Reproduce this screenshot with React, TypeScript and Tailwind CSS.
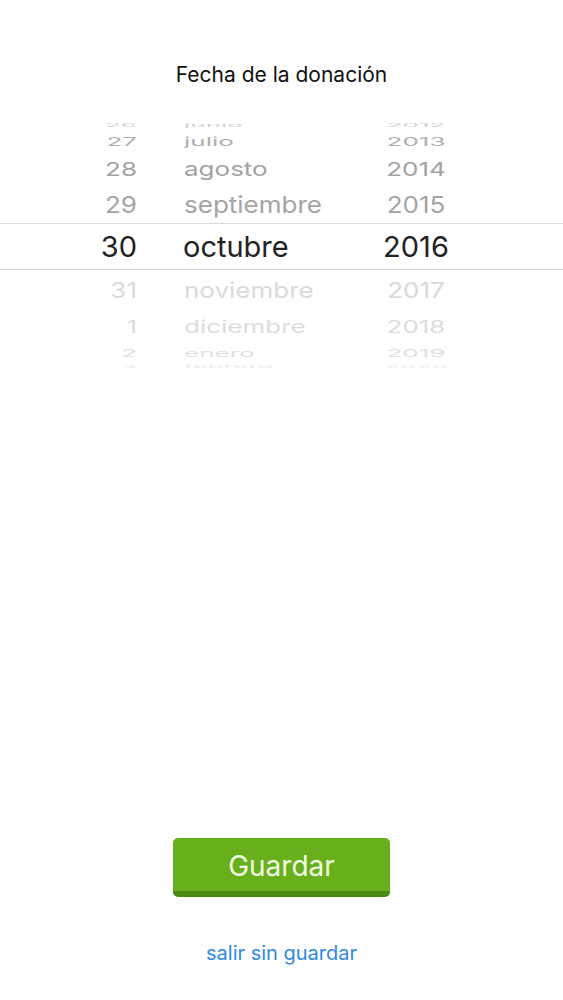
import React from "react";

type Row = {
  day: string;
  month: string;
  year: string;
  h: string;
  sy: string;
  color: string;
};

const above: Row[] = [
  { day: "26", month: "junio", year: "2012", h: "h-[12px]", sy: "scale-y-[0.16]", color: "text-[#d0d0d0]" },
  { day: "27", month: "julio", year: "2013", h: "h-[20px]", sy: "scale-y-[0.45]", color: "text-[#b0b0b0]" },
  { day: "28", month: "agosto", year: "2014", h: "h-[34px]", sy: "scale-y-[0.74]", color: "text-[#a2a2a2]" },
  { day: "29", month: "septiembre", year: "2015", h: "h-[37px]", sy: "scale-y-[0.88]", color: "text-[#a4a4a4]" },
];

const below: Row[] = [
  { day: "31", month: "noviembre", year: "2017", h: "h-[40px]", sy: "scale-y-[0.84]", color: "text-[#dadada]" },
  { day: "1", month: "diciembre", year: "2018", h: "h-[34px]", sy: "scale-y-[0.64]", color: "text-[#dcdcdc]" },
  { day: "2", month: "enero", year: "2019", h: "h-[18px]", sy: "scale-y-[0.42]", color: "text-[#e0e0e0]" },
  { day: "3", month: "febrero", year: "2020", h: "h-[10px]", sy: "scale-y-[0.15]", color: "text-[#eaeaea]" },
];

const PickerRow = ({ r }: { r: Row }) => (
  <div className={`flex items-center leading-none text-[26px] ${r.h} ${r.color}`}>
    <div className="w-[137px] flex justify-end">
      <span className={`inline-block ${r.sy}`}>{r.day}</span>
    </div>
    <div className="ml-[47px] w-[180px] flex justify-start">
      <span className={`inline-block ${r.sy}`}>{r.month}</span>
    </div>
    <div className="w-[104px] flex justify-center">
      <span className={`inline-block ${r.sy}`}>{r.year}</span>
    </div>
  </div>
);

const App = () => {
  return (
    <div className="w-[563px] h-[1000px] bg-white font-['Inter','Liberation_Sans',sans-serif] flex flex-col items-center pt-[62px] overflow-hidden">
      <h1 className="h-[26px] leading-[26px] text-[21px] text-[#111]">Fecha de la donación</h1>

      {/* date wheel */}
      <div className="mt-[32px] w-full flex flex-col">
        {above.map((r) => (
          <PickerRow key={r.day} r={r} />
        ))}
        <div className="h-[47px] border-y border-[#d9d9d9] flex items-center leading-none text-[29px] text-[#222]">
          <div className="w-[137px] text-right">30</div>
          <div className="ml-[46px] w-[181px]">octubre</div>
          <div className="w-[104px] text-center">2016</div>
        </div>
        {below.map((r) => (
          <PickerRow key={r.day} r={r} />
        ))}
      </div>

      <button className="mt-[466px] w-[217px] h-[59px] pt-[3px] rounded-[5px] bg-[#67b01c] border-b-[6px] border-[#4b8a10] text-[#f2fbe4] text-[28px] leading-none">
        Guardar
      </button>

      <a className="mt-[44px] text-[20px] leading-[24px] text-[#2e8ae2]">salir sin guardar</a>
    </div>
  );
};

export default App;
